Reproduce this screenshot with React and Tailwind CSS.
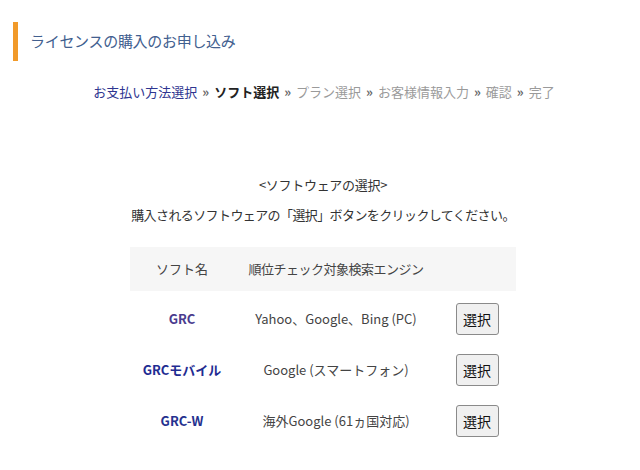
import React from 'react';

const font = { fontFamily: '"Noto Sans CJK JP", "Noto Sans", sans-serif' };

const steps = [
  { label: 'お支払い方法選択', cls: 'text-[#2e3590]' },
  { label: 'ソフト選択', cls: 'text-[#222] font-bold' },
  { label: 'プラン選択', cls: 'text-[#9a9a9a]' },
  { label: 'お客様情報入力', cls: 'text-[#9a9a9a]' },
  { label: '確認', cls: 'text-[#9a9a9a]' },
  { label: '完了', cls: 'text-[#9a9a9a]' },
];

const softs = [
  { name: 'GRC', engine: 'Yahoo、Google、Bing (PC)', color: 'text-[#4a3b8e]' },
  { name: 'GRCモバイル', engine: 'Google (スマートフォン)', color: 'text-[#1f2c92]' },
  { name: 'GRC-W', engine: '海外Google (61ヵ国対応)', color: 'text-[#25318f]' },
];

export default function App() {
  return (
    <div className="w-[640px] h-[470px] bg-white overflow-hidden" style={font}>
      {/* page title */}
      <div className="pt-[22px] pl-[13px]">
        <div className="flex items-center h-[39px] border-l-[5px] border-[#f19a2a] pl-[12px]">
          <h1 className="text-[15px] text-[#42608f] tracking-[-0.3px]">ライセンスの購入のお申し込み</h1>
        </div>
      </div>

      {/* steps */}
      <div className="mt-[21px] flex justify-center pl-[8px] text-[13px]">
        {steps.map((s, i) => (
          <span key={s.label} className="flex items-center">
            {i > 0 && <span className="px-[5px] text-[#666] font-bold">»</span>}
            <span className={s.cls}>{s.label}</span>
          </span>
        ))}
      </div>

      <div className="mt-[73px] flex flex-col items-center pl-[6px] text-[13px] text-[#333]">
        <p className="tracking-[-0.3px]">&lt;ソフトウェアの選択&gt;</p>
        <p className="mt-[11px] tracking-[-0.6px]">購入されるソフトウェアの「選択」ボタンをクリックしてください。</p>

        <div className="mt-[22px] w-[386px]">
          <div className="flex items-center h-[44px] bg-[#f6f6f6] text-[#444]">
            <div className="w-[104px] text-center">ソフト名</div>
            <div className="w-[204px] text-center tracking-[-0.5px]">順位チェック対象検索エンジン</div>
            <div className="flex-1" />
          </div>
          <div className="mt-[3px]">
            {softs.map((s) => (
              <div key={s.name} className="flex items-center h-[51px]">
                <div className={`w-[104px] text-center font-bold ${s.color}`}>{s.name}</div>
                <div className="w-[204px] text-center text-[#444]">{s.engine}</div>
                <div className="flex-1 flex justify-center">
                  <button className="w-[43px] h-[32px] rounded-[3px] border border-[#8a8a8a] bg-[#f0f0f0] text-[14px] text-[#111]">
                    選択
                  </button>
                </div>
              </div>
            ))}
          </div>
        </div>
      </div>
    </div>
  );
}
